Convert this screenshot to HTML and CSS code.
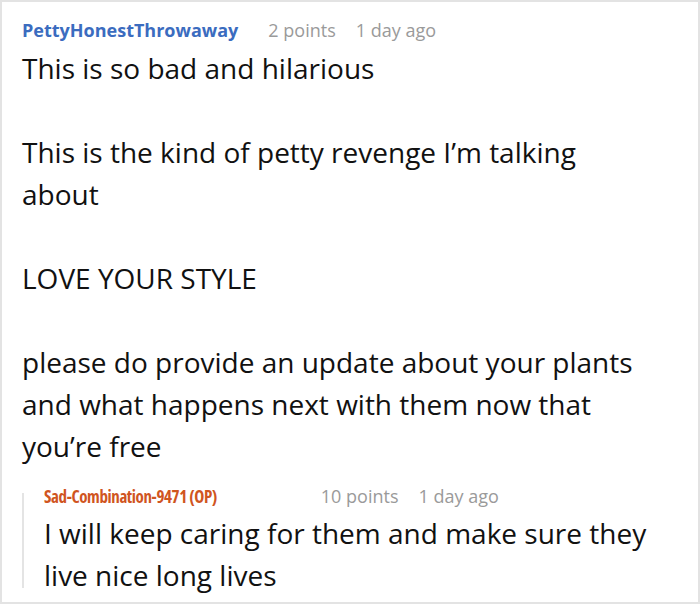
FILE: index.html
```html
<!DOCTYPE html>
<html>
<head>
<meta charset="utf-8">
<link rel="stylesheet" href="styles.css">
</head>
<body>
<div class="frame">
  <div class="comment">
    <div class="meta">
      <span class="author">PettyHonestThrowaway</span>
      <span class="info">2 points</span>
      <span class="info">1 day ago</span>
    </div>
    <div class="body">
      <p>This is so bad and hilarious</p>
      <p>This is the kind of petty revenge I’m talking about</p>
      <p>LOVE YOUR STYLE</p>
      <p>please do provide an update about your plants and what happens next with them now that you’re free</p>
    </div>
    <div class="reply">
      <div class="meta reply-meta">
        <span class="author op">Sad-Combination-9471 (OP)</span>
        <span class="info">10 points</span>
        <span class="info">1 day ago</span>
      </div>
      <div class="body reply-body">
        <p>I will keep caring for them and make sure they live nice long lives</p>
      </div>
    </div>
  </div>
</div>
</body>
</html>
```

FILE: styles.css
```css
html, body {
  margin: 0;
  padding: 0;
  background: #fff;
}
.frame {
  width: 700px;
  height: 604px;
  box-sizing: border-box;
  border: 2px solid #e3e3e3;
  overflow: hidden;
  font-family: "Open Sans", "Noto Sans", sans-serif;
}
.comment {
  padding: 16px 45px 0 20px;
}
.meta {
  display: flex;
  align-items: baseline;
  gap: 20px;
  font-size: 18px;
  line-height: 24px;
}
.author {
  font-weight: 700;
  color: #3b6cbf;
  margin-right: 10px;
}
.info {
  color: #9a9a9a;
}
.body {
  margin-top: 5px;
  font-size: 28px;
  line-height: 42px;
  color: #111;
}
.body p {
  margin: 0 0 42px 0;
}
.body p:last-child {
  margin-bottom: 0;
}
.reply {
  position: relative;
  margin-top: 17px;
  padding-left: 22px;
}
.reply::before {
  content: "";
  position: absolute;
  left: 0;
  top: 9px;
  bottom: 8px;
  width: 2px;
  background: #e4e4e4;
}
.reply-meta .author {
  font-size: 17px;
  font-stretch: 75%;
  letter-spacing: -0.4px;
  margin-right: 84px;
}
.reply-body {
  margin-top: 3px;
  font-size: 28px;
}
.op {
  color: #d0551f;
}
```
